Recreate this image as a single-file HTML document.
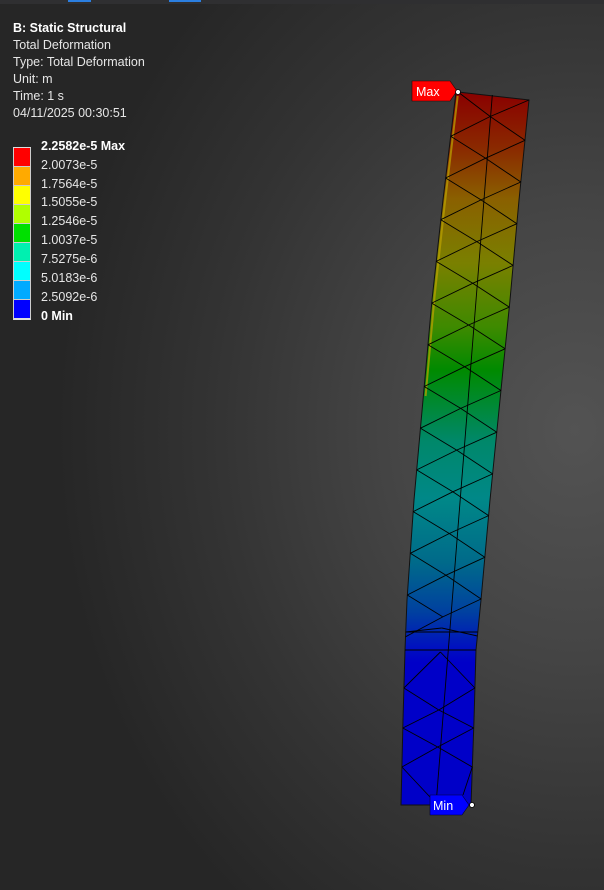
<!DOCTYPE html>
<html><head><meta charset="utf-8"><style>
html,body{margin:0;padding:0}
body{width:604px;height:890px;overflow:hidden;position:relative;font-family:"Liberation Sans","DejaVu Sans",sans-serif;
background:radial-gradient(ellipse 520px 620px at 575px 430px,#535353 0%,#454545 35%,#333 70%,#262626 100%);}
.top{position:absolute;left:0;top:0;width:604px;height:4px;background:#2f2f31}
.tab{position:absolute;top:0;height:2px;background:#2b7fe0}
.info{position:absolute;left:13px;top:20px;color:#e6e6e6;font-size:12.5px;line-height:17px}
.info b{color:#fff}
.leg{position:absolute;left:13px;top:146px}
.sw{width:16px;height:18px;border:1px solid #ccc;border-top:none}
.lbl{position:absolute;left:28px;color:#e6e6e6;font-size:12.5px;line-height:14px}
svg{position:absolute;left:0;top:0}
</style></head><body>
<div class="top"></div>
<div class="tab" style="left:68px;width:23px"></div>
<div class="tab" style="left:169px;width:32px"></div>
<div class="info"><b>B: Static Structural</b><br>Total Deformation<br>Type: Total Deformation<br>Unit: m<br>Time: 1 s<br>04/11/2025 00:30:51</div>
<div class="leg">
<div style="width:18px;border-top:2px solid #ddd;position:absolute;left:0;top:1px"></div>
<div style="position:absolute;left:0;top:2px">
<div class="sw" style="background:#f00;width:16px"></div>
<div class="sw" style="background:#ffaa00"></div>
<div class="sw" style="background:#ff0"></div>
<div class="sw" style="background:#b0ff00"></div>
<div class="sw" style="background:#00e000"></div>
<div class="sw" style="background:#00f0b0"></div>
<div class="sw" style="background:#0ff"></div>
<div class="sw" style="background:#00aaff"></div>
<div class="sw" style="background:#0000ff;border-bottom:2px solid #ddd"></div>
</div>
</div>
<div class="lbl" style="left:41px;top:139px;font-weight:bold;color:#fff">2.2582e-5 Max</div>
<div class="lbl" style="left:41px;top:158px">2.0073e-5</div>
<div class="lbl" style="left:41px;top:177px">1.7564e-5</div>
<div class="lbl" style="left:41px;top:195px">1.5055e-5</div>
<div class="lbl" style="left:41px;top:214px">1.2546e-5</div>
<div class="lbl" style="left:41px;top:233px">1.0037e-5</div>
<div class="lbl" style="left:41px;top:252px">7.5275e-6</div>
<div class="lbl" style="left:41px;top:271px">5.0183e-6</div>
<div class="lbl" style="left:41px;top:290px">2.5092e-6</div>
<div class="lbl" style="left:41px;top:309px;font-weight:bold;color:#fff">0 Min</div>

<svg width="604" height="890" id="s">
<defs><linearGradient id="g" gradientUnits="userSpaceOnUse" x1="0" y1="92" x2="0" y2="805">
<stop offset="0" stop-color="#8a0000"/>
<stop offset="0.08" stop-color="#8a2a00"/>
<stop offset="0.15" stop-color="#8a6000"/>
<stop offset="0.24" stop-color="#7a8000"/>
<stop offset="0.33" stop-color="#3e8a00"/>
<stop offset="0.39" stop-color="#008a00"/>
<stop offset="0.49" stop-color="#00886a"/>
<stop offset="0.57" stop-color="#008888"/>
<stop offset="0.66" stop-color="#006a8a"/>
<stop offset="0.73" stop-color="#0040a0"/>
<stop offset="0.78" stop-color="#0010c0"/>
<stop offset="0.8" stop-color="#0000c8"/>
<stop offset="1" stop-color="#0000c8"/>
</linearGradient></defs>
<g id="mesh"></g>
<polygon points="412,81 450,81 457,91 450,101 412,101" fill="#ff0000" stroke="#300" stroke-width="0.6"/>
<text x="416" y="96" fill="#fff" font-size="12.5" font-family="Liberation Sans,sans-serif">Max</text>
<circle cx="458" cy="92" r="2.5" fill="#fff" stroke="#000" stroke-width="0.8"/>
<polygon points="430,795 462,795 469,805 462,815 430,815" fill="#0000ff" stroke="#003" stroke-width="0.6"/>
<text x="433" y="810" fill="#fff" font-size="12.5" font-family="Liberation Sans,sans-serif">Min</text>
<circle cx="472" cy="805" r="2.5" fill="#fff" stroke="#000" stroke-width="0.8"/>
</svg>
<script>
function interp(pts,y){for(let i=0;i<pts.length-1;i++){const[a,b]=[pts[i],pts[i+1]];if(y<=b[0]){return a[1]+(b[1]-a[1])*(y-a[0])/(b[0]-a[0]);}}return pts[pts.length-1][1];}
const L=[[92,456],[200,443],[300,432],[400,423],[500,414],[600,407],[650,405],[720,403],[805,401]];
const R=[[92,529],[100,529],[200,519],[300,510],[400,500],[500,490],[600,481],[650,476],[720,474],[805,471]];
const lx=y=>interp(L,y), rx=y=>interp(R,y), mx=y=>(lx(y)+rx(y))/2;
let s='<polygon points="458,92 529,100 '+R.slice(2).map(p=>p[1]+','+p[0]).join(' ')+' '+L.slice().reverse().map(p=>p[1]+','+p[0]).join(' ')+'" fill="url(#g)" stroke="#111" stroke-width="1"/>';
let edge=[];for(let y=96;y<=400;y+=20)edge.push((lx(y)+2.2).toFixed(1)+','+y);
s+='<polyline points="'+edge.join(' ')+'" fill="none" stroke="#b8a000" stroke-width="2" opacity="0.75"/>';
let ln=(x1,y1,x2,y2)=>s+='<line x1="'+x1.toFixed(1)+'" y1="'+y1.toFixed(1)+'" x2="'+x2.toFixed(1)+'" y2="'+y2.toFixed(1)+'" stroke="#000" stroke-width="0.9"/>';
ln(mx(95),95,mx(805),805);
const h=41.7;let mids=[];for(let y=325-h*5;y<640;y+=h)mids.push(y);
mids.forEach(m=>{
 let lu=m-h/2-1, ld=m+h/2-1, ru=m-h/2+3, rd=m+h/2+3;
 if(lu>95)ln(mx(m),m,lx(lu),lu); if(ld<640)ln(mx(m),m,lx(ld),ld);
 if(ru>100)ln(mx(m),m,rx(ru),ru); if(rd<640)ln(mx(m),m,rx(rd),rd);
});
ln(458,92,mx(mids[0]),mids[0]);ln(529,100,mx(mids[0]),mids[0]);
ln(lx(632),632,rx(632),632);ln(lx(650),650,rx(650),650);
ln(lx(632),632,mx(632),628);ln(mx(632),628,rx(636),636);
// lower mesh diamonds
const lm=[652,710,747],sd=[688,728,767];
lm.forEach(m=>{sd.forEach(y=>{if(Math.abs(y-m)<45){ln(mx(m),m,lx(y),y);ln(mx(m),m,rx(y),y);}});});
ln(lx(767),767,430,797);ln(rx(767),767,463,795);
document.getElementById('mesh').innerHTML=s;
</script>
</body></html>
